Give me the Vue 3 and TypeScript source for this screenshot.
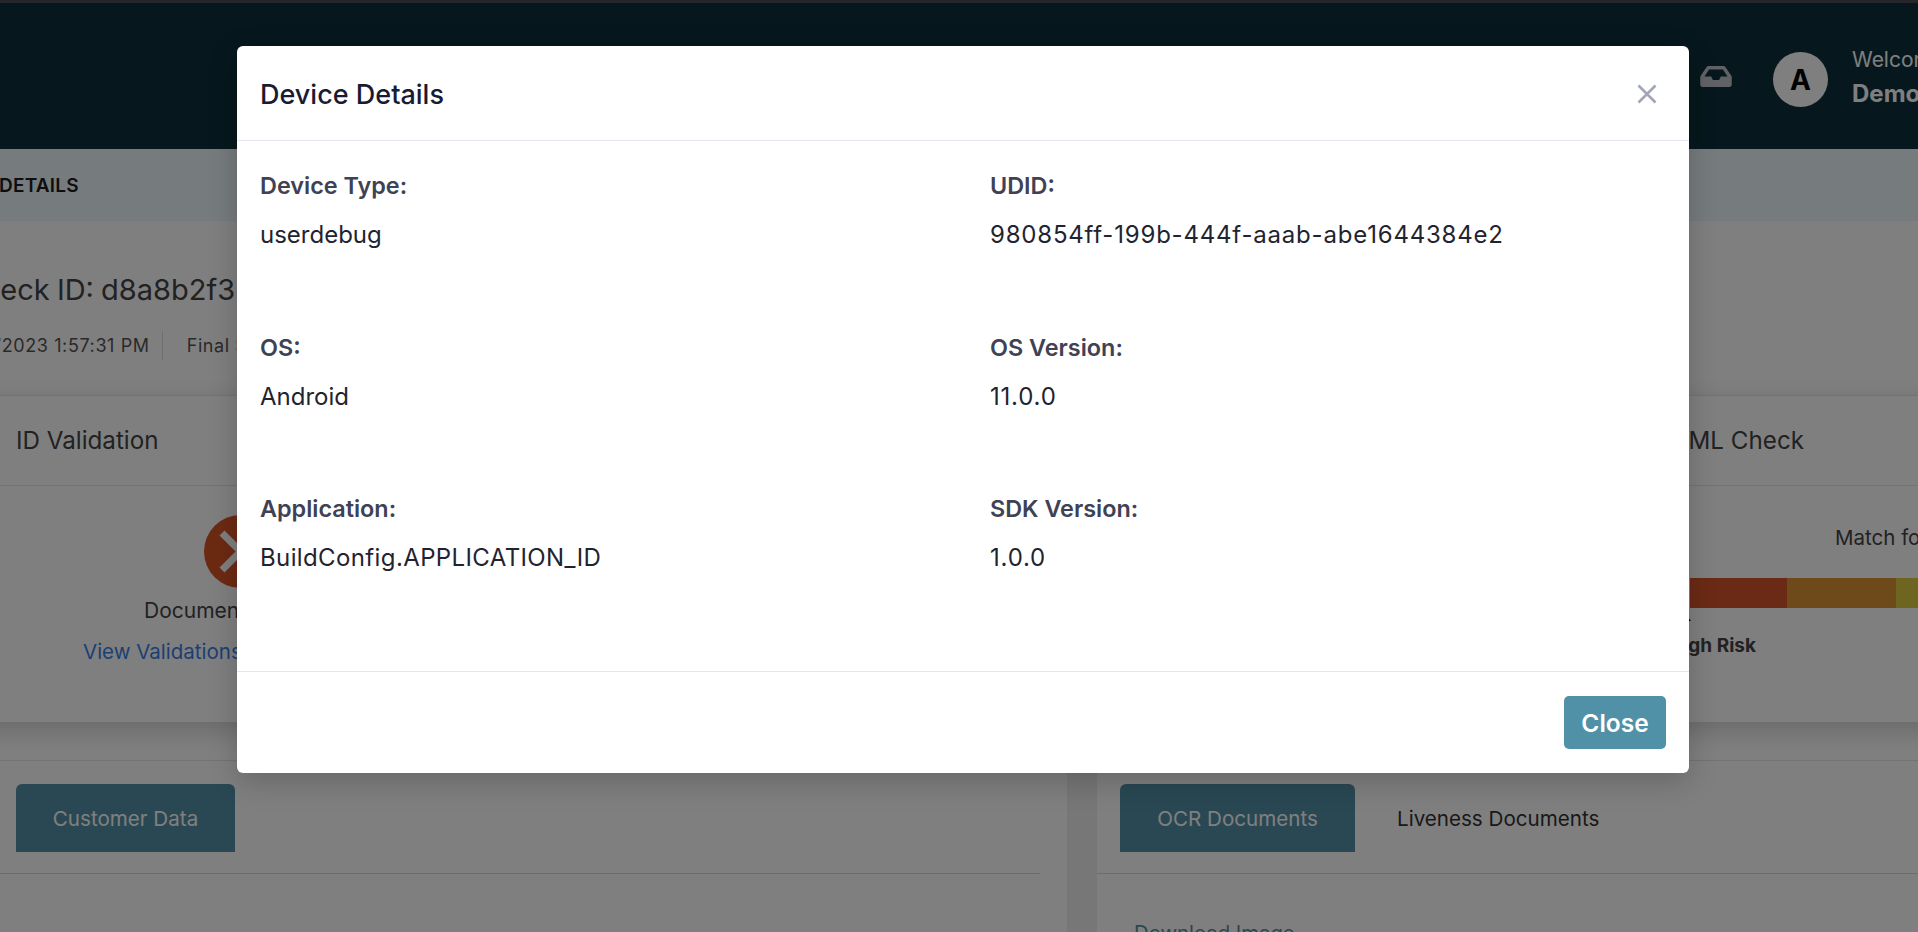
<script setup lang="ts">
interface Detail { label: string; value: string; spacing: string }
const details: Detail[] = [
  { label: 'Device Type:', value: 'userdebug', spacing: 'plain-value' },
  { label: 'UDID:', value: '980854ff-199b-444f-aaab-abe1644384e2', spacing: 'digits' },
  { label: 'OS:', value: 'Android', spacing: 'plain-value' },
  { label: 'OS Version:', value: '11.0.0', spacing: 'digits' },
  { label: 'Application:', value: 'BuildConfig.APPLICATION_ID', spacing: 'loose' },
  { label: 'SDK Version:', value: '1.0.0', spacing: 'digits' },
]
</script>

<template>
  <div class="viewport">
    <div class="page">
      <div class="strip"></div>
      <header class="topbar">
        <svg class="inbox" viewBox="0 64 576 384" aria-hidden="true">
          <path fill="#c0c4cc" d="M567.938 243.908L462.25 85.374A48.003 48.003 0 0 0 422.311 64H153.689a48 48 0 0 0-39.938 21.374L8.062 243.908A47.994 47.994 0 0 0 0 270.533V400c0 26.510 21.490 48 48 48h480c26.510 0 48-21.490 48-48V270.533a47.994 47.994 0 0 0-8.062-26.625zM162.252 128h251.497l85.333 128H376l-32 64H232l-32-64H76.918l85.334-128z" />
        </svg>
        <div class="avatar">A</div>
        <div class="user">
          <div class="welcome">Welcome</div>
          <div class="name">Demo User</div>
        </div>
      </header>
      <div class="subbar"><span>CHECK DETAILS</span></div>
      <section class="check">
        <h1>Check ID: d8a8b2f3</h1>
        <div class="meta">
          <span>3/7/2023 1:57:31 PM</span>
          <i></i>
          <span>Final Status</span>
        </div>
      </section>
      <section class="cards">
        <div class="card-head">
          <span>ID Validation</span>
          <span class="aml">AML Check</span>
        </div>
        <div class="card-body">
          <div class="validation">
            <div class="fail">
              <svg viewBox="0 0 73 73" aria-hidden="true">
                <path d="M18 18 55 55M55 18 18 55" stroke="#fff" stroke-width="7" fill="none" />
              </svg>
            </div>
            <div class="doc">Document Failed</div>
            <a class="view">View Validations</a>
          </div>
          <div class="risk">
            <div class="match">Match for</div>
            <div class="bar"><b class="r1"></b><b class="r2"></b><b class="r3"></b></div>
            <div class="tick"></div>
            <div class="risk-label">High Risk</div>
          </div>
        </div>
      </section>
      <section class="lower">
        <div class="panel left">
          <div class="tabs">
            <span class="tab active customer">Customer Data</span>
          </div>
        </div>
        <div class="panel right">
          <div class="tabs">
            <span class="tab active ocr">OCR Documents</span>
            <span class="tab plain">Liveness Documents</span>
          </div>
          <a class="download">Download Image</a>
        </div>
      </section>
    </div>

    <div class="backdrop">
      <div class="modal">
        <div class="modal-head">
          <h2>Device Details</h2>
          <svg class="close-x" viewBox="0 0 20 20" aria-hidden="true">
            <path d="M1.500 1.500 18.500 18.500M18.500 1.500 1.500 18.500" stroke="#a1a5b7" stroke-width="2.600" fill="none" />
          </svg>
        </div>
        <div class="modal-body">
          <div v-for="d in details" :key="d.label" class="field">
            <div class="label">{{ d.label }}</div>
            <div class="value" :class="d.spacing">{{ d.value }}</div>
          </div>
        </div>
        <div class="modal-foot">
          <button class="close-btn" type="button">Close</button>
        </div>
      </div>
    </div>
  </div>
</template>

<style>
html, body { margin: 0; padding: 0; overflow: hidden; background: #fff; }
</style>

<style scoped>
.viewport {
  position: relative;
  width: 1918px;
  height: 932px;
  overflow: hidden;
  font-family: Inter, "Liberation Sans", sans-serif;
  color: #3a3a3f;
}
.page { width: 2100px; margin-left: -80px; }
.strip { height: 3px; background: #4c4c55; }
.topbar {
  height: 146px;
  background: #0c313a;
  display: flex;
  align-items: flex-start;
  box-sizing: border-box;
  padding: 49px 0 0 1780px;
}
.inbox { width: 32px; height: 21px; margin-top: 14px; margin-right: 41px; flex: none; }
.avatar {
  width: 55px; height: 55px; border-radius: 50%;
  background: #fff; color: #000;
  display: flex; align-items: center; justify-content: center;
  font-size: 28px; font-weight: 700; flex: none;
}
.user { margin-left: 24px; margin-top: -4px; color: #fff; white-space: nowrap; }
.welcome { font-size: 21px; line-height: 24px; color: #fff; }
.name { font-size: 24px; line-height: 26px; font-weight: 700; margin-top: 9px; }
.subbar {
  height: 72px; background: #edf7fc;
  display: flex; align-items: center;
  box-sizing: border-box;
  font-size: 19px; font-weight: 600; color: #1c1c1c; letter-spacing: .2px;
}
.subbar span { margin-left: 6px; }
.check { height: 174px; box-sizing: border-box; padding: 51px 0 0 0; }
.check h1 { margin: 0 0 0 42px; font-size: 29px; line-height: 36px; font-weight: 400; color: #444; white-space: nowrap; word-spacing: -1px; }
.meta {
  display: flex; align-items: center; margin-top: 22px; height: 30px;
  font-size: 18px; letter-spacing: .6px; color: #555; white-space: nowrap; padding-left: 45px;
}
.meta i { display: block; width: 1px; height: 29px; background: #ddd; margin: 0 24px 0 12px; }
.cards { background: #fff; box-shadow: 0 8px 24px rgba(0, 0, 0, .18); border-top: 1px solid #e6e6e6; }
.card-head {
  height: 90px; box-sizing: border-box; border-bottom: 1px solid #e6e6e6;
  display: flex; align-items: center; padding-left: 96px;
  font-size: 24.200px; color: #444; position: relative;
}
.aml { margin-left: auto; margin-right: 216px; }
.card-body { height: 236px; display: flex; justify-content: space-between; }
.validation { width: 480px; }
.fail {
  width: 73px; height: 73px; border-radius: 50%; background: #d85426;
  margin: 29px 0 0 284px;
}
.fail svg { display: block; width: 73px; height: 73px; }
.doc { font-size: 21px; color: #444; margin: 10px 0 0 224px; white-space: nowrap; }
.view { display: block; font-size: 20.500px; color: #3a7ee8; margin: 16px 0 0 163px; white-space: nowrap; }
.risk { width: 330px; position: relative; }
.match { font-size: 20.500px; color: #444; margin: 39px 0 0 145px; white-space: nowrap; }
.bar { display: flex; height: 30px; margin-top: 28px; }
.bar b { display: block; height: 30px; }
.r1 { width: 97px; background: #d6542a; }
.r2 { width: 109px; background: #dc9434; }
.r3 { width: 124px; background: #dccb40; }
.tick {
  width: 0; height: 0; margin: 9px 0 0 -5px;
  border-left: 3px solid transparent; border-right: 3px solid transparent;
  border-bottom: 4px solid #000;
}
.risk-label { font-size: 19px; font-weight: 700; color: #444; margin: 13px 0 0 -21px; white-space: nowrap; }
.lower {
  display: flex; margin-top: 38px; height: 172px;
  background: #eeeeee; box-sizing: border-box;
}
.panel { background: #fff; border-top: 1px solid #e6e6e6; box-sizing: border-box; }
.left { width: 1147px; padding: 23px 27px 0 96px; flex: none; }
.right { flex: 1; margin-left: 30px; padding: 23px 0 0 23px; }
.tabs {
  display: flex; align-items: flex-start;
  height: 90px; box-sizing: border-box; border-bottom: 1px solid #d8d8d8;
  margin-left: -200px; padding-left: 200px;
}
.right .tabs { margin-left: -23px; padding-left: 23px; }
.tab {
  display: flex; align-items: center; justify-content: center;
  height: 68px; font-size: 20.600px; white-space: nowrap; box-sizing: border-box;
}
.active { background: #5291a6; color: #fff; border-radius: 6px 6px 0 0; }
.customer { width: 219px; }
.ocr { width: 235px; }
.plain { margin-left: 42px; color: #333; }
.download { display: block; margin: 46px 0 0 14px; font-size: 20.300px; color: #52909f; }
.backdrop { position: absolute; inset: 0; background: rgba(0, 0, 0, .5); }
.modal {
  position: absolute; left: 237px; top: 46px; width: 1452px; height: 727px;
  background: #fff; border-radius: 6px;
  box-shadow: 0 8px 30px rgba(0, 0, 0, .2);
  display: flex; flex-direction: column;
}
.modal-head {
  height: 95px; box-sizing: border-box; border-bottom: 1px solid #e4e6ef;
  display: flex; align-items: center; justify-content: space-between;
  padding: 3px 32px 0 23px; flex: none;
}
.modal-head h2 { margin: 0; font-size: 27px; font-weight: 500; color: #181c32; }
.close-x { width: 20px; height: 20px; display: block; margin-top: -2px; }
.modal-body {
  flex: 1; display: grid; grid-template-columns: 730px 1fr; grid-auto-rows: 161.500px;
  padding: 31px 23px 0; box-sizing: border-box; align-content: start;
}
.label { font-size: 23.400px; line-height: 28px; font-weight: 600; color: #3f4254; }
.value { font-size: 24px; line-height: 28px; color: #1f2430; margin-top: 21px; }
.digits { letter-spacing: .8px; }
.loose { letter-spacing: .38px; }
.plain-value { letter-spacing: 0; }
.modal-foot {
  height: 102px; box-sizing: border-box; border-top: 1px solid #e4e6ef; flex: none;
  display: flex; justify-content: flex-end; align-items: center; padding: 0 23px 0 0;
}
.close-btn {
  width: 102px; height: 53px; border: 0; border-radius: 5px; background: #5191a8; color: #fff;
  font: 600 24.500px Inter, "Liberation Sans", sans-serif; padding: 0;
}
</style>
